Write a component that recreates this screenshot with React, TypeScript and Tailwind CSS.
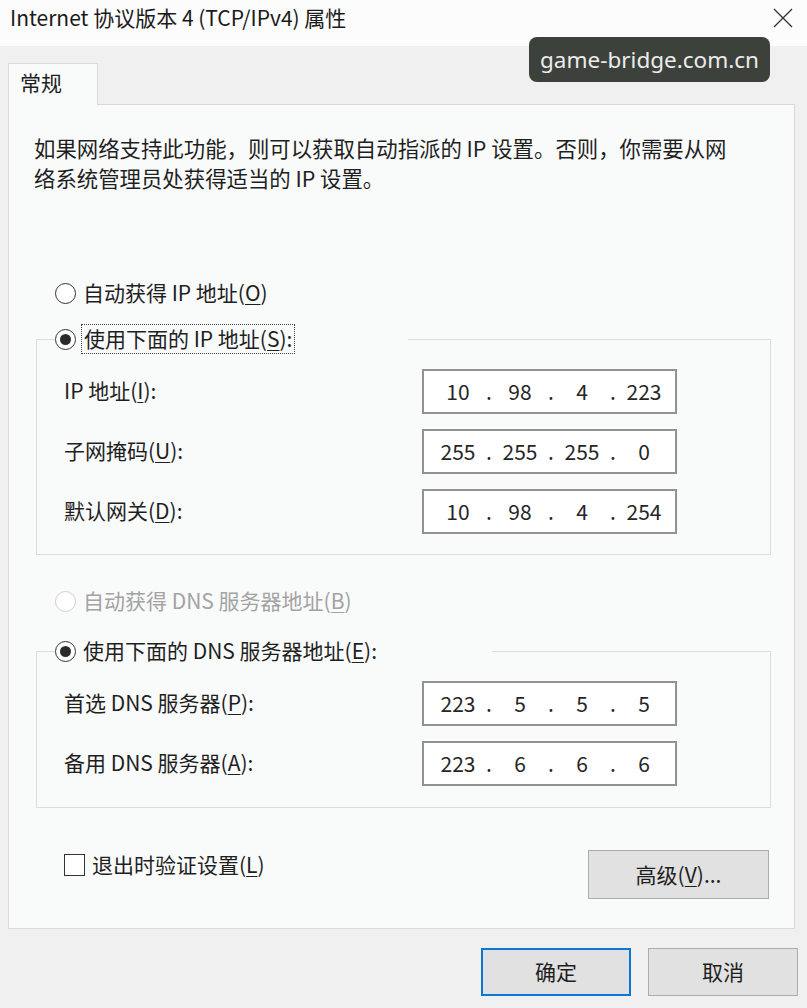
import React from "react";

function Radio({ checked, disabled }: { checked?: boolean; disabled?: boolean }) {
  return (
    <span
      className={
        "flex h-[21px] w-[21px] shrink-0 items-center justify-center rounded-full border-[1.5px] bg-white " +
        (disabled ? "border-[#cfcfcf]" : "border-[#333333]")
      }
    >
      {checked && <span className="h-[11px] w-[11px] rounded-full bg-[#2b2b2b]" />}
    </span>
  );
}

function Key({ k }: { k: string }) {
  return <span className="underline decoration-1 underline-offset-[3px]">{k}</span>;
}

function IpField({ parts }: { parts: string[] }) {
  return (
    <div className="flex h-[45px] w-[255px] items-center border-2 border-[#929292] bg-white pb-[2px] pl-[7px] text-[#262626]">
      {parts.map((p, i) => (
        <React.Fragment key={i}>
          {i > 0 && <span className="w-[8px] text-center">.</span>}
          <span className="w-[54px] text-center">{p}</span>
        </React.Fragment>
      ))}
    </div>
  );
}

function FieldRow({ label, parts }: { label: React.ReactNode; parts: string[] }) {
  return (
    <div className="flex h-[45px] items-center">
      <div className="w-[358px] pb-[3px]">{label}</div>
      <IpField parts={parts} />
    </div>
  );
}

function Button({ children, primary, className }: { children: React.ReactNode; primary?: boolean; className?: string }) {
  return (
    <div
      className={
        "flex items-center justify-center bg-[#e1e1e1] pb-[2px] text-[#1e1e1e] " +
        (primary ? "border-2 border-[#0a78d4] " : "border border-[#adadad] ") +
        (className ?? "")
      }
    >
      {children}
    </div>
  );
}

export default function App() {
  return (
    <div className="relative h-[1008px] w-[807px] overflow-hidden bg-[#f0f0f0] font-['Noto_Sans_CJK_SC','Noto_Sans',sans-serif] text-[21px] leading-[30px] text-[#1f1f1f]">
      {/* title bar */}
      <div className="flex h-[46px] items-start justify-between bg-[#fcfcfc] pl-[10px]">
        <div className="pt-[3px] text-[21px] leading-[28px] text-[#1a1a1a]">Internet 协议版本 4 (TCP/IPv4) 属性</div>
        <svg className="mr-[14px] mt-[8px]" width="20" height="20" viewBox="0 0 20 20" fill="none">
          <path d="M1 1L19 19M19 1L1 19" stroke="#333" strokeWidth="1.3" />
        </svg>
      </div>

      {/* watermark */}
      <div className="absolute left-[529px] top-[37px] flex h-[45px] w-[241px] items-center justify-center rounded-[8px] bg-[#3c413c] font-['Noto_Sans',sans-serif] text-[22.5px] leading-[30px] text-[#ececec]">
        game-bridge.com.cn
      </div>

      <div className="px-[8px] pt-[17px]">
        {/* tab */}
        <div className="relative z-10 -mb-px flex h-[42px] w-[90px] items-center border-l border-r border-t border-[#d9d9d9] bg-[#f9fafa] pb-[6px] pl-[11px]">
          常规
        </div>

        {/* tab page */}
        <div className="flex h-[825px] w-[787px] flex-col border border-[#d9d9d9] bg-[#f9fafa]">
          <div className="ml-[25px] mt-[28px] text-[21.4px] leading-[30px]">
            <div>如果网络支持此功能，则可以获取自动指派的 IP 设置。否则，你需要从网</div>
            <div>络系统管理员处获得适当的 IP 设置。</div>
          </div>

          <div className="ml-[46px] mt-[85px] flex h-[30px] items-center gap-[7px]">
            <Radio />
            <span className="pb-[3px]">
              自动获得 IP 地址(<Key k="O" />)
            </span>
          </div>

          <fieldset className="ml-[27px] mr-[23px] mt-[16px] border border-[#dcdcdc]">
            <legend className="ml-[18px]">
              <div className="flex h-[30px] w-[353px] items-center gap-[5px]">
                <Radio checked />
                <span className="flex h-[30px] items-center border border-dotted border-[#444] px-[2px] pb-[2px]">
                  使用下面的 IP 地址(<Key k="S" />):
                </span>
              </div>
            </legend>
            <div className="flex flex-col gap-[15px] pb-[20px] pl-[27px] pt-[15px]">
              <FieldRow
                label={
                  <>
                    IP 地址(<Key k="I" />):
                  </>
                }
                parts={["10", "98", "4", "223"]}
              />
              <FieldRow
                label={
                  <>
                    子网掩码(<Key k="U" />):
                  </>
                }
                parts={["255", "255", "255", "0"]}
              />
              <FieldRow
                label={
                  <>
                    默认网关(<Key k="D" />):
                  </>
                }
                parts={["10", "98", "4", "254"]}
              />
            </div>
          </fieldset>

          <div className="ml-[46px] mt-[31px] flex h-[30px] items-center gap-[7px] text-[#a3a3a3]">
            <Radio disabled />
            <span className="pb-[3px]">
              自动获得 DNS 服务器地址(<Key k="B" />)
            </span>
          </div>

          <fieldset className="ml-[27px] mr-[23px] mt-[20px] border border-[#dcdcdc]">
            <legend className="ml-[18px]">
              <div className="flex h-[30px] w-[437px] items-center gap-[7px]">
                <Radio checked />
                <span className="pb-[3px]">
                  使用下面的 DNS 服务器地址(<Key k="E" />):
                </span>
              </div>
            </legend>
            <div className="flex flex-col gap-[15px] pb-[21px] pl-[27px] pt-[15px]">
              <FieldRow
                label={
                  <>
                    首选 DNS 服务器(<Key k="P" />):
                  </>
                }
                parts={["223", "5", "5", "5"]}
              />
              <FieldRow
                label={
                  <>
                    备用 DNS 服务器(<Key k="A" />):
                  </>
                }
                parts={["223", "6", "6", "6"]}
              />
            </div>
          </fieldset>

          <div className="mr-[25px] mt-[42px] flex items-start justify-between pl-[55px]">
            <div className="flex h-[30px] items-center gap-[7px]">
              <span className="h-[22px] w-[21px] border-[1.5px] border-[#333333] bg-white" />
              <span className="pb-[3px]">
                退出时验证设置(<Key k="L" />)
              </span>
            </div>
            <Button className="h-[49px] w-[181px]">
              <span>
                高级(<Key k="V" />)...
              </span>
            </Button>
          </div>
        </div>

        {/* dialog buttons */}
        <div className="mt-[19px] flex justify-end gap-[17px] pr-[1px]">
          <Button primary className="h-[48px] w-[150px]">
            确定
          </Button>
          <Button className="h-[48px] w-[150px]">取消</Button>
        </div>
      </div>
    </div>
  );
}
